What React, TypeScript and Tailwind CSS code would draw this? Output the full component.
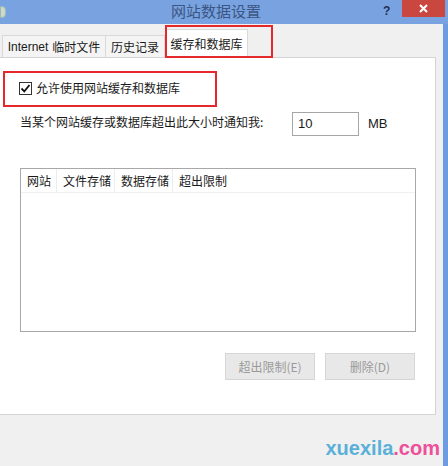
import React from 'react';

const FONT = '"Noto Sans CJK SC", "Liberation Sans", sans-serif';

const COLUMNS = [
  { label: '网站', width: 36 },
  { label: '文件存储', width: 58 },
  { label: '数据存储', width: 58 },
  { label: '超出限制', width: 80 },
];

function Checkbox() {
  return (
    <div className="w-[13px] h-[13px] border border-[#333] bg-white flex items-center justify-center">
      <svg width="11" height="11" viewBox="0 0 11 11">
        <path d="M1.5 5.5 L4.3 8.3 L9.5 2" fill="none" stroke="#111" strokeWidth="1.8" />
      </svg>
    </div>
  );
}

export default function App() {
  return (
    <div
      className="relative w-[448px] h-[466px] overflow-hidden bg-[#f0f0f0] flex flex-col text-[#1a1a1a]"
      style={{ fontFamily: FONT }}
    >
      {/* Title bar */}
      <div className="relative h-[24px] shrink-0 bg-[#79a3e0] flex items-center">
        <div className="w-[6px] h-[12px] bg-[#cfd9c8] border border-[#9bb] rounded-r-sm" />
        <div className="absolute left-[171px] top-0 text-[15px] text-[#3b5684] leading-[22px]">
          网站数据设置
        </div>
        <div className="absolute left-[383px] top-[2px] text-[12px] font-bold text-[#1f2f55]" style={{ fontFamily: '"Liberation Sans", sans-serif' }}>
          ?
        </div>
        <div className="absolute left-[402px] top-0 w-[43px] h-[17px] bg-[#c9473f] flex items-center justify-center">
          <svg width="9" height="9" viewBox="0 0 9 9">
            <path d="M1 1 L8 8 M8 1 L1 8" stroke="#fff" strokeWidth="2" />
          </svg>
        </div>
      </div>

      <div className="flex flex-1 min-h-0">
        <div className="flex flex-col w-[443px]">
          {/* Tabs */}
          <div className="h-[33px] flex items-end pl-[2px] text-[12px]">
            <div className="h-[22px] w-[104px] border border-b-0 border-[#d9d9d9] bg-[#f4f4f4] flex items-center justify-center">
              <span style={{ fontFamily: '"Liberation Sans", "Noto Sans CJK SC", sans-serif' }}>Internet</span>
              <span className="ml-[4px]">临时文件</span>
            </div>
            <div className="h-[22px] w-[59px] border border-b-0 border-l-0 border-[#d9d9d9] bg-[#f4f4f4] flex items-center justify-center">
              历史记录
            </div>
            <div className="h-[28px] w-[83px] border border-b-0 border-[#d9d9d9] bg-white flex items-center justify-center">
              缓存和数据库
            </div>
          </div>

          {/* Panel */}
          <div className="relative h-[358px] w-[436px] bg-white border-r border-b border-t border-[#d4d4d4] text-[12px]">
            <div className="flex items-center pl-[19px] pt-[24px] gap-[4px]">
              <Checkbox />
              <span className="leading-[14px] -mt-[2px]">允许使用网站缓存和数据库</span>
            </div>

            <div className="flex items-center pl-[20px] mt-[17px] h-[24px]">
              <span className="w-[272px] -mt-[4px]">当某个网站缓存或数据库超出此大小时通知我:</span>
              <div className="w-[67px] h-[24px] border border-[#a6a6a6] flex items-center pl-[5px] text-[13px]" style={{ fontFamily: '"Liberation Sans", sans-serif' }}>
                10
              </div>
              <span className="ml-[9px] text-[13px]" style={{ fontFamily: '"Liberation Sans", sans-serif' }}>MB</span>
            </div>

            <div className="ml-[20px] mt-[32px] w-[396px] h-[164px] border border-[#a8a8a8] flex flex-col">
              <div className="h-[24px] flex items-center border-b border-[#f0f0f0]">
                {COLUMNS.map((c, i) => (
                  <div
                    key={c.label}
                    className={`h-full flex items-center pl-[6px] ${i < COLUMNS.length - 1 ? 'border-r border-[#ececec]' : ''}`}
                    style={{ width: c.width }}
                  >
                    {c.label}
                  </div>
                ))}
              </div>
            </div>

            <div className="flex justify-end gap-[10px] mt-[21px] pr-[20px]">
              <div className="w-[90px] h-[27px] bg-[#e8e8e8] border border-[#d6d6d6] flex items-center justify-center text-[#9a9a9a]">
                超出限制(E)
              </div>
              <div className="w-[90px] h-[27px] bg-[#e8e8e8] border border-[#d6d6d6] flex items-center justify-center text-[#9a9a9a]">
                删除(D)
              </div>
            </div>
          </div>

          {/* Watermark */}
          <div className="flex-1 flex items-end justify-end pr-[3px] pb-[6px]">
            <span className="text-[20px] font-bold leading-[24px]" style={{ fontFamily: '"Liberation Sans", sans-serif' }}>
              <span className="text-[#5ab0d8]">xuexila</span>
              <span className="text-[#ee4f9a]">.com</span>
            </span>
          </div>
        </div>
        <div className="w-[5px] bg-[#6c9be0]" />
      </div>

      {/* Red annotation boxes */}
      <div className="absolute left-[165px] top-[25px] w-[108px] h-[33px] border-2 border-[#e5282c]" />
      <div className="absolute left-[3px] top-[71px] w-[214px] h-[36px] border-2 border-[#e5282c]" />
    </div>
  );
}
